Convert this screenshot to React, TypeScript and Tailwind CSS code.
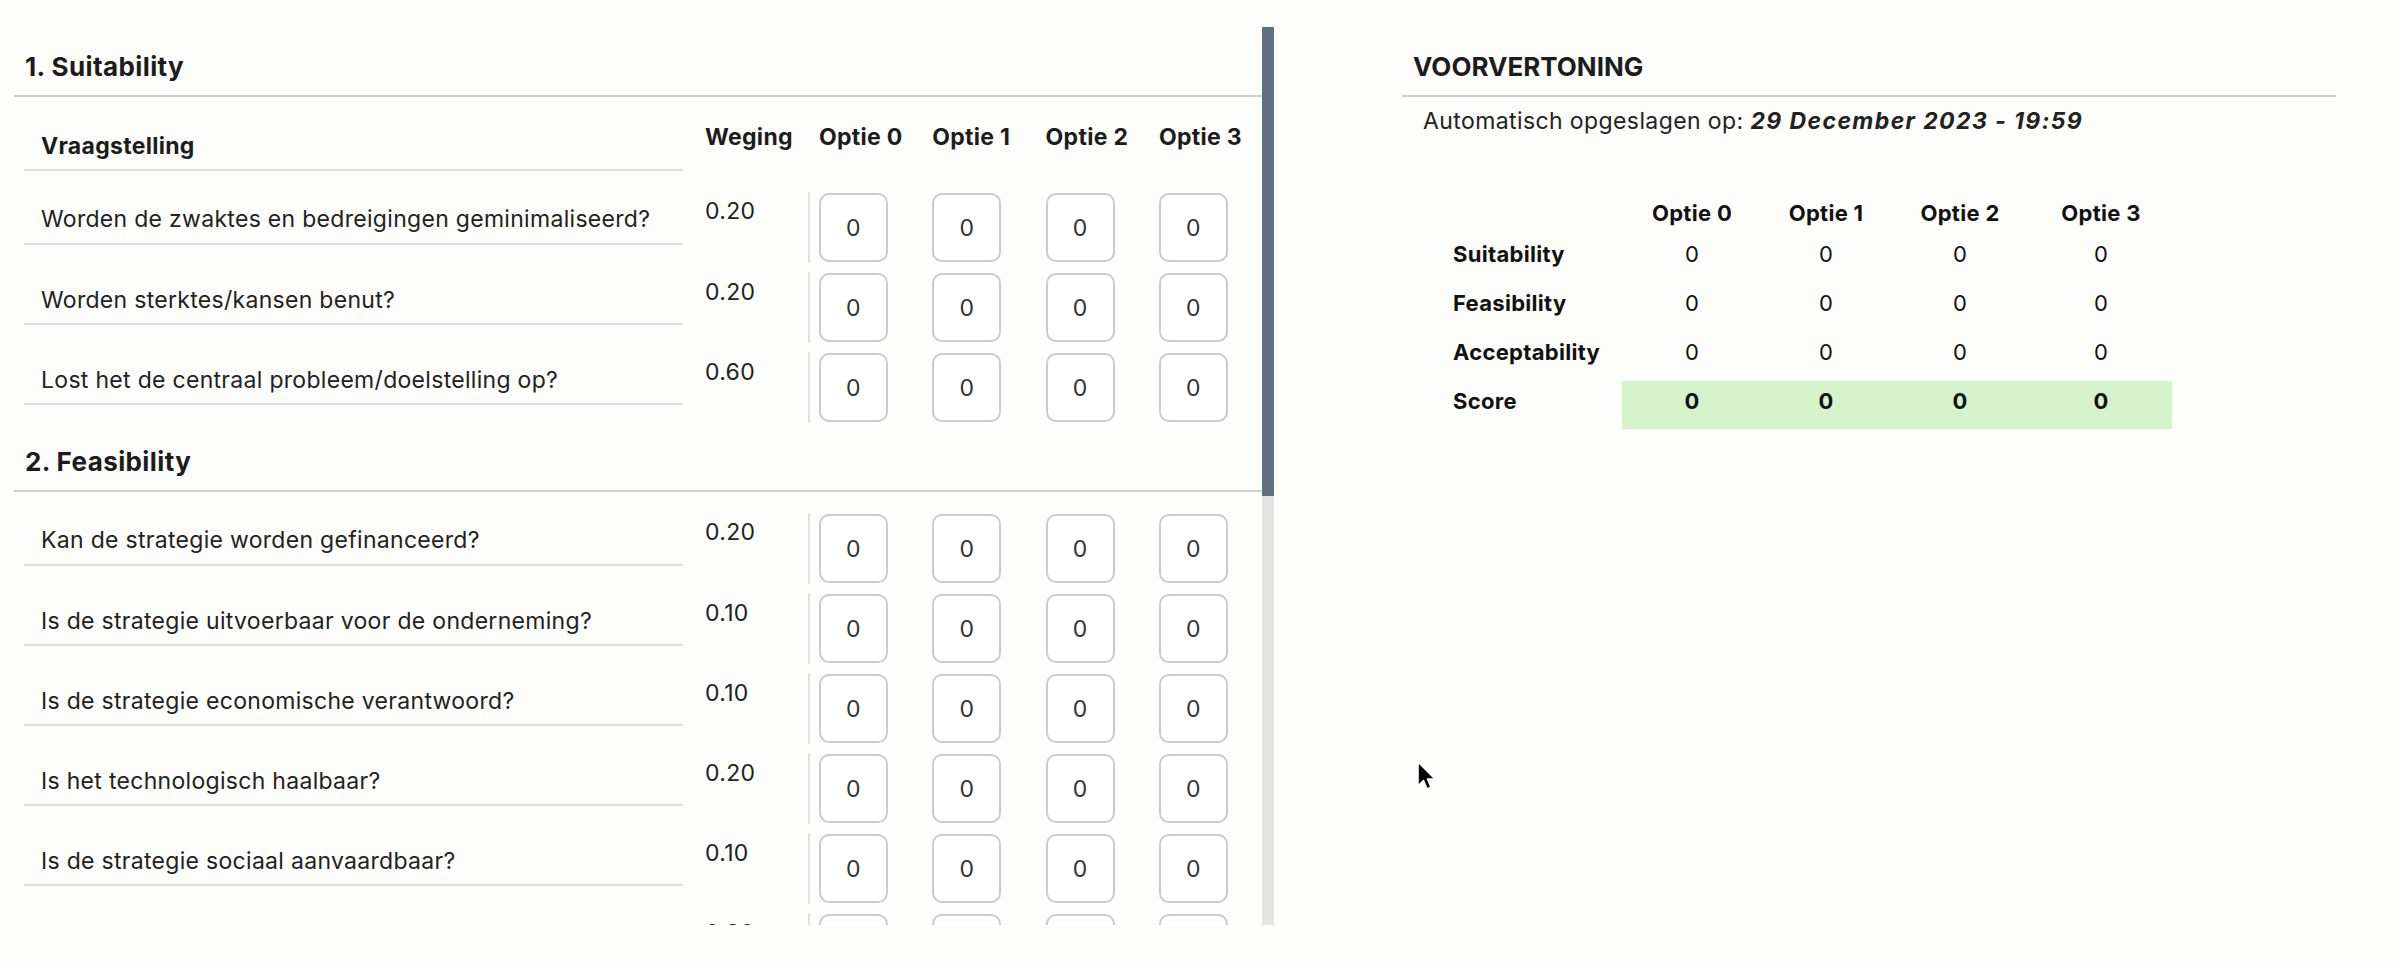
import React from "react";

interface Question {
  text: string;
  weight: string;
}

interface Section {
  title: string;
  questions: Question[];
  showHeader?: boolean;
}

const options = ["Optie 0", "Optie 1", "Optie 2", "Optie 3"];

const sections: Section[] = [
  {
    title: "1. Suitability",
    showHeader: true,
    questions: [
      { text: "Worden de zwaktes en bedreigingen geminimaliseerd?", weight: "0.20" },
      { text: "Worden sterktes/kansen benut?", weight: "0.20" },
      { text: "Lost het de centraal probleem/doelstelling op?", weight: "0.60" },
    ],
  },
  {
    title: "2. Feasibility",
    questions: [
      { text: "Kan de strategie worden gefinanceerd?", weight: "0.20" },
      { text: "Is de strategie uitvoerbaar voor de onderneming?", weight: "0.10" },
      { text: "Is de strategie economische verantwoord?", weight: "0.10" },
      { text: "Is het technologisch haalbaar?", weight: "0.20" },
      { text: "Is de strategie sociaal aanvaardbaar?", weight: "0.10" },
      { text: "Is de strategie juridisch haalbaar?", weight: "0.30" },
    ],
  },
];

const previewRows = ["Suitability", "Feasibility", "Acceptability"];
const colWidths = ["w-[140px]", "w-[128px]", "w-[140px]", "w-[142px]"];

function ScoreBox() {
  return (
    <div className="flex h-[69px] w-[69px] items-center justify-center rounded-[10px] border-2 border-[#c8cbd3] bg-white text-[23px] leading-[28px] text-[#333]">
      0
    </div>
  );
}

function QuestionRow({ question, first }: { question: Question; first: boolean }) {
  return (
    <div className={`flex ${first ? "h-[74px]" : "h-[80px]"}`}>
      <div
        className={`ml-[24px] h-full w-[659px] border-b-2 border-[#dddee3] pl-[17px] text-[23px] leading-[28px] text-[#222] ${
          first ? "pt-[34px]" : "pt-[41px]"
        }`}
      >
        {question.text}
      </div>
      <div
        className={`w-[125px] pl-[22px] text-[23px] leading-[28px] text-[#222] ${
          first ? "pt-[26px]" : "pt-[33px]"
        }`}
      >
        {question.weight}
      </div>
      <div className={first ? "pt-[21px]" : "pt-[27px]"}>
        <div className="flex gap-[44.3px] border-l-2 border-[#e3e3e3] py-[1px] pl-[9px]">
          {options.map((o) => (
            <ScoreBox key={o} />
          ))}
        </div>
      </div>
    </div>
  );
}

function SectionBlock({ section, index }: { section: Section; index: number }) {
  return (
    <section>
      <div className="pl-[14px]">
        <h2
          className={`border-b-2 border-[#cdced2] pb-[12px] pl-[11px] text-[26px] font-bold leading-[32px] tracking-[0.4px] text-[#1c1c1c] ${
            index === 0 ? "pt-[24px]" : "pt-[41px]"
          }`}
        >
          {section.title}
        </h2>
      </div>
      {section.showHeader && (
        <div className="flex h-[74px] font-bold text-[#1c1c1c]">
          <div className="ml-[24px] h-full w-[659px] border-b-2 border-[#dddee3] pl-[17px] pt-[35px] text-[23px] leading-[28px]">
            Vraagstelling
          </div>
          <div className="w-[125px] pl-[22px] pt-[26px] text-[23px] leading-[28px]">
            Weging
          </div>
          <div className="flex gap-[44.3px] pl-[11px] pt-[26px] text-[23px] leading-[28px]">
            {options.map((o) => (
              <div key={o} className="w-[69px] whitespace-nowrap">
                {o}
              </div>
            ))}
          </div>
        </div>
      )}
      {section.questions.map((q, i) => (
        <QuestionRow key={q.text} question={q} first={i === 0} />
      ))}
    </section>
  );
}

function Cursor() {
  return (
    <svg
      className="absolute left-[1414px] top-[759px]"
      width="24"
      height="34"
      viewBox="0 0 24 34"
    >
      <path
        d="M4 3 L4 27 L9.5 21.5 L13 30 L17 28.3 L13.5 20 L21 20 Z"
        fill="#000"
        stroke="#fff"
        strokeWidth="1.6"
        strokeLinejoin="round"
      />
    </svg>
  );
}

export default function App() {
  return (
    <main className="relative h-[968px] w-[2394px] overflow-hidden bg-[#fdfdfb] tracking-[0.3px] [font-family:Inter,sans-serif]">
      <div className="flex pt-[27px]">
        {/* vragenlijst met eigen scrollbalk */}
        <div className="flex h-[898px]">
          <div className="w-[1262px] overflow-hidden">
            {sections.map((s, i) => (
              <SectionBlock key={s.title} section={s} index={i} />
            ))}
          </div>
          <div className="flex w-[12px] flex-col bg-[#e4e4e4]">
            <div className="h-[469px] bg-[#5d7180]" />
          </div>
        </div>

        {/* voorvertoning */}
        <div className="ml-[128px] w-[934px]">
          <h2 className="border-b-2 border-[#cdced2] pb-[12px] pl-[11px] pt-[24px] text-[26px] font-bold leading-[32px] tracking-normal text-[#1c1c1c]">
            VOORVERTONING
          </h2>
          <p className="mt-[10px] pl-[21px] text-[23px] leading-[28px] tracking-[0.4px] text-[#222]">
            Automatisch opgeslagen op:{" "}
            <span className="font-bold italic tracking-[1.4px]">29 December 2023 - 19:59</span>
          </p>

          <div className="mt-[64px] pl-[51px] text-[22px] leading-[28px] text-[#111]">
            <div className="flex h-[35px] font-bold">
              <div className="w-[169px]" />
              {options.map((o, i) => (
                <div key={o} className={`${colWidths[i]} text-center`}>
                  {o}
                </div>
              ))}
            </div>
            {previewRows.map((r) => (
              <div key={r} className="flex h-[49px] pt-[6px]">
                <div className="w-[169px] font-bold">{r}</div>
                {options.map((o, i) => (
                  <div key={o} className={`${colWidths[i]} text-center`}>
                    0
                  </div>
                ))}
              </div>
            ))}
            <div className="flex h-[49px] font-bold">
              <div className="w-[169px] pt-[6px]">Score</div>
              <div className="flex h-[48px] bg-[#d5f3ca] pt-[6px]">
                {options.map((o, i) => (
                  <div key={o} className={`${colWidths[i]} text-center`}>
                    0
                  </div>
                ))}
              </div>
            </div>
          </div>
        </div>
      </div>
      <Cursor />
    </main>
  );
}
